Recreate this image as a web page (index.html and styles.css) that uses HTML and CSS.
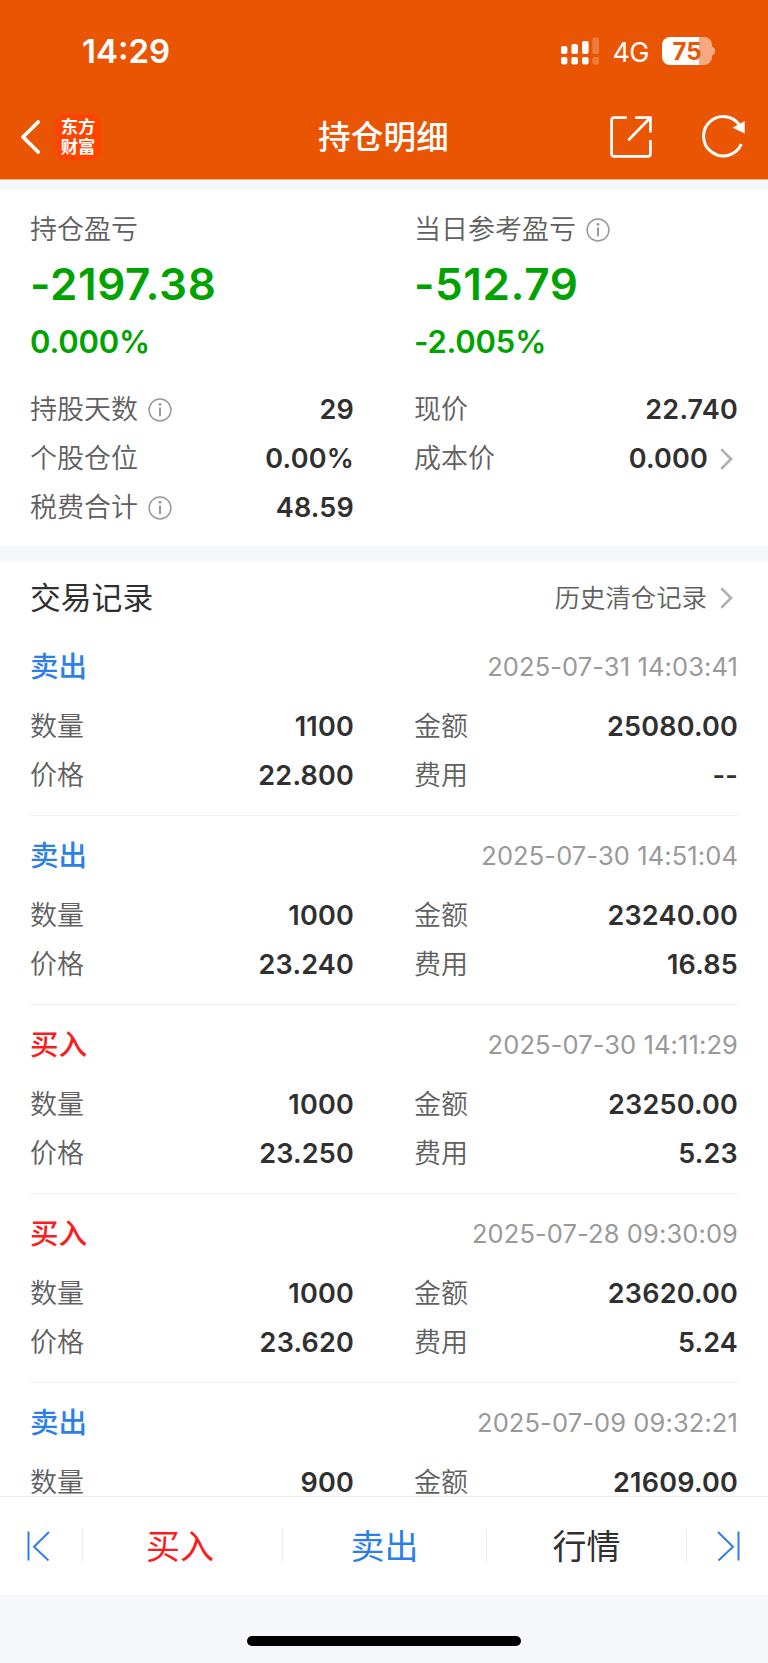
FILE: index.html
```html
<!DOCTYPE html>
<html lang="zh-CN">
<head>
    <meta charset="UTF-8">
    <meta name="viewport" content="width=device-width, initial-scale=1.0">
    <title>持仓明细</title>
    <link rel="stylesheet" href="styles.css">
</head>
<body>
    <header class="header">
        <div class="status-bar">
            <span class="time">14:29</span>
            <div class="status-icons">
                <svg class="signal" width="39" height="28" viewBox="0 0 39 28" fill="#fff">
                    <rect x="0" y="9" width="6.4" height="8" rx="2"/>
                    <rect x="0" y="20" width="6.4" height="7.6" rx="2"/>
                    <rect x="10.4" y="7" width="6.6" height="10" rx="2"/>
                    <rect x="10.4" y="20" width="6.6" height="7.6" rx="2"/>
                    <rect x="21" y="4" width="6.6" height="13" rx="2"/>
                    <rect x="21" y="20" width="6.6" height="7.6" rx="2"/>
                    <g opacity="0.22">
                        <rect x="31.4" y="0.5" width="6.6" height="16.5" rx="2"/>
                        <rect x="31.4" y="20" width="6.6" height="7.6" rx="2"/>
                    </g>
                </svg>
                <span class="network">4G</span>
                <div class="battery"><span>75</span></div>
                <svg width="4" height="10" viewBox="0 0 4 10"><path d="M0 0.5C4.2 2 4.2 8 0 9.5Z" fill="#fff" opacity="0.5"/></svg>
            </div>
        </div>
        <nav class="nav-bar">
            <div class="nav-left">
                <svg width="22" height="36" viewBox="0 0 22 36" fill="none" stroke="#fff" stroke-width="3.8" stroke-linecap="round" stroke-linejoin="round"><path d="M18.2 3L3 18L18.2 33"/></svg>
                <div class="logo">东方<br>财富</div>
            </div>
            <h1 class="nav-title">持仓明细</h1>
            <div class="nav-right">
                <svg width="42" height="42" viewBox="0 0 42 42" fill="none" stroke="#fff" stroke-width="2.7"><path d="M16.7 1.6H4Q1.6 1.6 1.6 4V38Q1.6 40.4 4 40.4H38Q40.4 40.4 40.4 38V24M25 1.6H40.4V16.5M40 2L18.3 24.3"/></svg>
                <svg width="44" height="44" viewBox="0 0 44 44" fill="none" stroke="#fff" stroke-width="3"><path d="M39.3 29.2A19.7 19.7 0 1 1 38 10.8"/><path d="M42.7 6V18.4L30.6 12.7Z" fill="#fff" stroke="none"/></svg>
            </div>
        </nav>
    </header>

    <main class="content">
        <section class="summary">
            <div class="columns">
                <div>
                    <div class="label profit-label">持仓盈亏</div>
                    <div class="profit">-2197.38</div>
                    <div class="percent">0.000%</div>
                </div>
                <div>
                    <div class="label profit-label">当日参考盈亏
                        <svg class="info" viewBox="0 0 24 24"><circle cx="12" cy="12" r="10.9"/><path d="M12 9.6V18.2"/><circle class="dot" cx="12" cy="6.3" r="1.4"/></svg>
                    </div>
                    <div class="profit">-512.79</div>
                    <div class="percent">-2.005%</div>
                </div>
            </div>
            <div class="columns details">
                <div class="row">
                    <span class="label">持股天数
                        <svg class="info" viewBox="0 0 24 24"><circle cx="12" cy="12" r="10.9"/><path d="M12 9.6V18.2"/><circle class="dot" cx="12" cy="6.3" r="1.4"/></svg>
                    </span>
                    <span class="value">29</span>
                </div>
                <div class="row"><span class="label">现价</span><span class="value">22.740</span></div>
                <div class="row"><span class="label">个股仓位</span><span class="value">0.00%</span></div>
                <div class="row">
                    <span class="label">成本价</span>
                    <span class="value">0.000<svg class="arrow" viewBox="0 0 13 22"><path d="M2 2L11 11L2 20"/></svg></span>
                </div>
                <div class="row">
                    <span class="label">税费合计
                        <svg class="info" viewBox="0 0 24 24"><circle cx="12" cy="12" r="10.9"/><path d="M12 9.6V18.2"/><circle class="dot" cx="12" cy="6.3" r="1.4"/></svg>
                    </span>
                    <span class="value">48.59</span>
                </div>
            </div>
        </section>

        <section class="records">
            <div class="records-head">
                <h2>交易记录</h2>
                <a class="history">历史清仓记录<svg class="arrow" viewBox="0 0 13 22"><path d="M2 2L11 11L2 20"/></svg></a>
            </div>

            <article class="record">
                <div class="record-head"><span class="type sell">卖出</span><time>2025-07-31 14:03:41</time></div>
                <div class="columns">
                    <div class="row"><span class="label">数量</span><span class="value">1100</span></div>
                    <div class="row"><span class="label">金额</span><span class="value">25080.00</span></div>
                    <div class="row"><span class="label">价格</span><span class="value">22.800</span></div>
                    <div class="row"><span class="label">费用</span><span class="value">--</span></div>
                </div>
            </article>

            <article class="record">
                <div class="record-head"><span class="type sell">卖出</span><time>2025-07-30 14:51:04</time></div>
                <div class="columns">
                    <div class="row"><span class="label">数量</span><span class="value">1000</span></div>
                    <div class="row"><span class="label">金额</span><span class="value">23240.00</span></div>
                    <div class="row"><span class="label">价格</span><span class="value">23.240</span></div>
                    <div class="row"><span class="label">费用</span><span class="value">16.85</span></div>
                </div>
            </article>

            <article class="record">
                <div class="record-head"><span class="type buy">买入</span><time>2025-07-30 14:11:29</time></div>
                <div class="columns">
                    <div class="row"><span class="label">数量</span><span class="value">1000</span></div>
                    <div class="row"><span class="label">金额</span><span class="value">23250.00</span></div>
                    <div class="row"><span class="label">价格</span><span class="value">23.250</span></div>
                    <div class="row"><span class="label">费用</span><span class="value">5.23</span></div>
                </div>
            </article>

            <article class="record">
                <div class="record-head"><span class="type buy">买入</span><time>2025-07-28 09:30:09</time></div>
                <div class="columns">
                    <div class="row"><span class="label">数量</span><span class="value">1000</span></div>
                    <div class="row"><span class="label">金额</span><span class="value">23620.00</span></div>
                    <div class="row"><span class="label">价格</span><span class="value">23.620</span></div>
                    <div class="row"><span class="label">费用</span><span class="value">5.24</span></div>
                </div>
            </article>

            <article class="record">
                <div class="record-head"><span class="type sell">卖出</span><time>2025-07-09 09:32:21</time></div>
                <div class="columns">
                    <div class="row"><span class="label">数量</span><span class="value">900</span></div>
                    <div class="row"><span class="label">金额</span><span class="value">21609.00</span></div>
                </div>
            </article>
        </section>
    </main>

    <footer>
        <div class="toolbar">
            <a class="step"><svg width="24" height="30" viewBox="0 0 24 30"><path d="M1.5 0.5V29.5M22 1L7 15.7L21.5 29.5"/></svg></a>
            <a class="action buy first">买入</a>
            <a class="action sell">卖出</a>
            <a class="action">行情</a>
            <a class="step next"><svg width="24" height="30" viewBox="0 0 24 30"><path d="M22.5 0.5V29.5M2 1L17 15.7L2.5 29.5"/></svg></a>
        </div>
        <div class="home-area"><div class="home-indicator"></div></div>
    </footer>
</body>
</html>
```
FILE: styles.css
```css
* { box-sizing: border-box; margin: 0; padding: 0; }
body { height: 1663px; display: flex; flex-direction: column; overflow: hidden; background: #fff; color: #303030; font-family: Inter, "Noto Sans CJK SC", sans-serif; }
svg { display: block; flex-shrink: 0; }

/* header */
.header { height: 180px; flex-shrink: 0; background: #ea5504; color: #fff; border-bottom: 1px solid #f6b48e; }
.status-bar { height: 102px; padding: 0 52px 0 82px; display: flex; align-items: center; justify-content: space-between; }
.time { font-size: 33px; font-weight: 600; }
.status-icons { display: flex; align-items: center; }
.network { margin: 2px 13px 0 12px; font-size: 27px; letter-spacing: -0.5px; }
.battery { width: 50px; height: 28px; border-radius: 8px; background: linear-gradient(to right, #fff 37px, #f5a981 37px); color: #ea5504; font-size: 24px; font-weight: 700; line-height: 29px; text-align: center; }
.nav-bar { height: 70px; padding: 0 22px 0 20px; display: grid; grid-template-columns: 1fr auto 1fr; align-items: center; }
.nav-left { display: flex; align-items: center; gap: 13px; }
.logo { width: 46px; height: 46px; padding-top: 3px; border-radius: 10px; background: #ff4400; font-size: 17.3px; font-weight: 700; line-height: 19.5px; text-align: center; }
.nav-title { padding: 2px 0 0 1px; font-size: 32.5px; font-weight: 500; line-height: 40px; letter-spacing: 0.2px; }
.nav-right { display: flex; align-items: center; justify-content: flex-end; gap: 50px; }

.content { flex: 1; min-height: 0; overflow: hidden; background: #f6f7fa; }
.columns { display: grid; grid-template-columns: 1fr 1fr; column-gap: 60px; }
.row { height: 49px; display: flex; align-items: center; justify-content: space-between; }
.label { display: flex; align-items: center; gap: 10px; color: #606060; font-family: Inter, "Noto Sans CJK SC DemiLight", "Noto Sans CJK SC", sans-serif; font-size: 27px; font-weight: 350; line-height: 40px; }
.value { display: flex; align-items: center; font-size: 27px; font-weight: 600; line-height: 26px; letter-spacing: 0.2px; }
.info { width: 24px; height: 24px; fill: none; stroke: #999; stroke-width: 1.5; }
.info path { stroke-width: 2; }
.info .dot { fill: #999; stroke: none; }
.arrow { width: 13px; height: 22px; margin: 0 5px 0 13px; fill: none; stroke: #b2b2b2; stroke-width: 2.7; stroke-linecap: round; }
.value .arrow { margin-left: 12px; }

/* position summary */
.summary { margin-top: 10px; height: 356px; padding: 20px 30px 0; background: #fff; }
.profit { height: 60px; margin-top: 4px; color: #00a200; font-size: 44px; font-weight: 600; line-height: 60px; letter-spacing: 0.6px; }
.percent { height: 55px; color: #00a200; font-size: 31px; font-weight: 600; line-height: 55px; letter-spacing: -0.2px; }
.details { margin-top: 16px; }

/* trade records */
.records { margin-top: 16px; padding: 0 30px; background: #fff; }
.records-head { height: 65px; padding-top: 7px; display: flex; align-items: center; justify-content: space-between; }
.records-head h2 { font-size: 30.8px; font-weight: 400; line-height: 40px; }
.history { display: flex; align-items: center; color: #606060; font-size: 25.4px; font-weight: 350; line-height: 40px; }
.record { height: 189px; padding-top: 15px; border-bottom: 1px solid #f3f3f3; }
.record-head { height: 50px; margin-bottom: 10px; display: flex; align-items: center; justify-content: space-between; }
.type { font-size: 28.5px; font-weight: 500; line-height: 40px; }
time { margin-bottom: 2px; color: #999; font-size: 25.5px; letter-spacing: 0.1px; }
.buy { color: #f91d1d; }
.sell { color: #2d7fe8; }

/* bottom toolbar */
.toolbar { height: 99px; display: grid; grid-template-columns: 82px 200px 204px 200px 82px; align-items: center; border-top: 1px solid #ebebeb; background: #fff; }
.step { padding-left: 27px; }
.step svg { fill: none; stroke: #2d7fe8; stroke-width: 2; }
.next { padding: 2px 0 0 29px; }
.action, .next { height: 34px; border-left: 1px solid #ebebeb; }
.action { font-size: 34px; line-height: 36px; text-align: center; }
.first { padding-right: 5px; }
.home-area { height: 68px; padding-top: 41px; background: #f6f7fa; }
.home-indicator { width: 274px; height: 10px; margin: 0 auto; border-radius: 5px; background: #000; }
```
